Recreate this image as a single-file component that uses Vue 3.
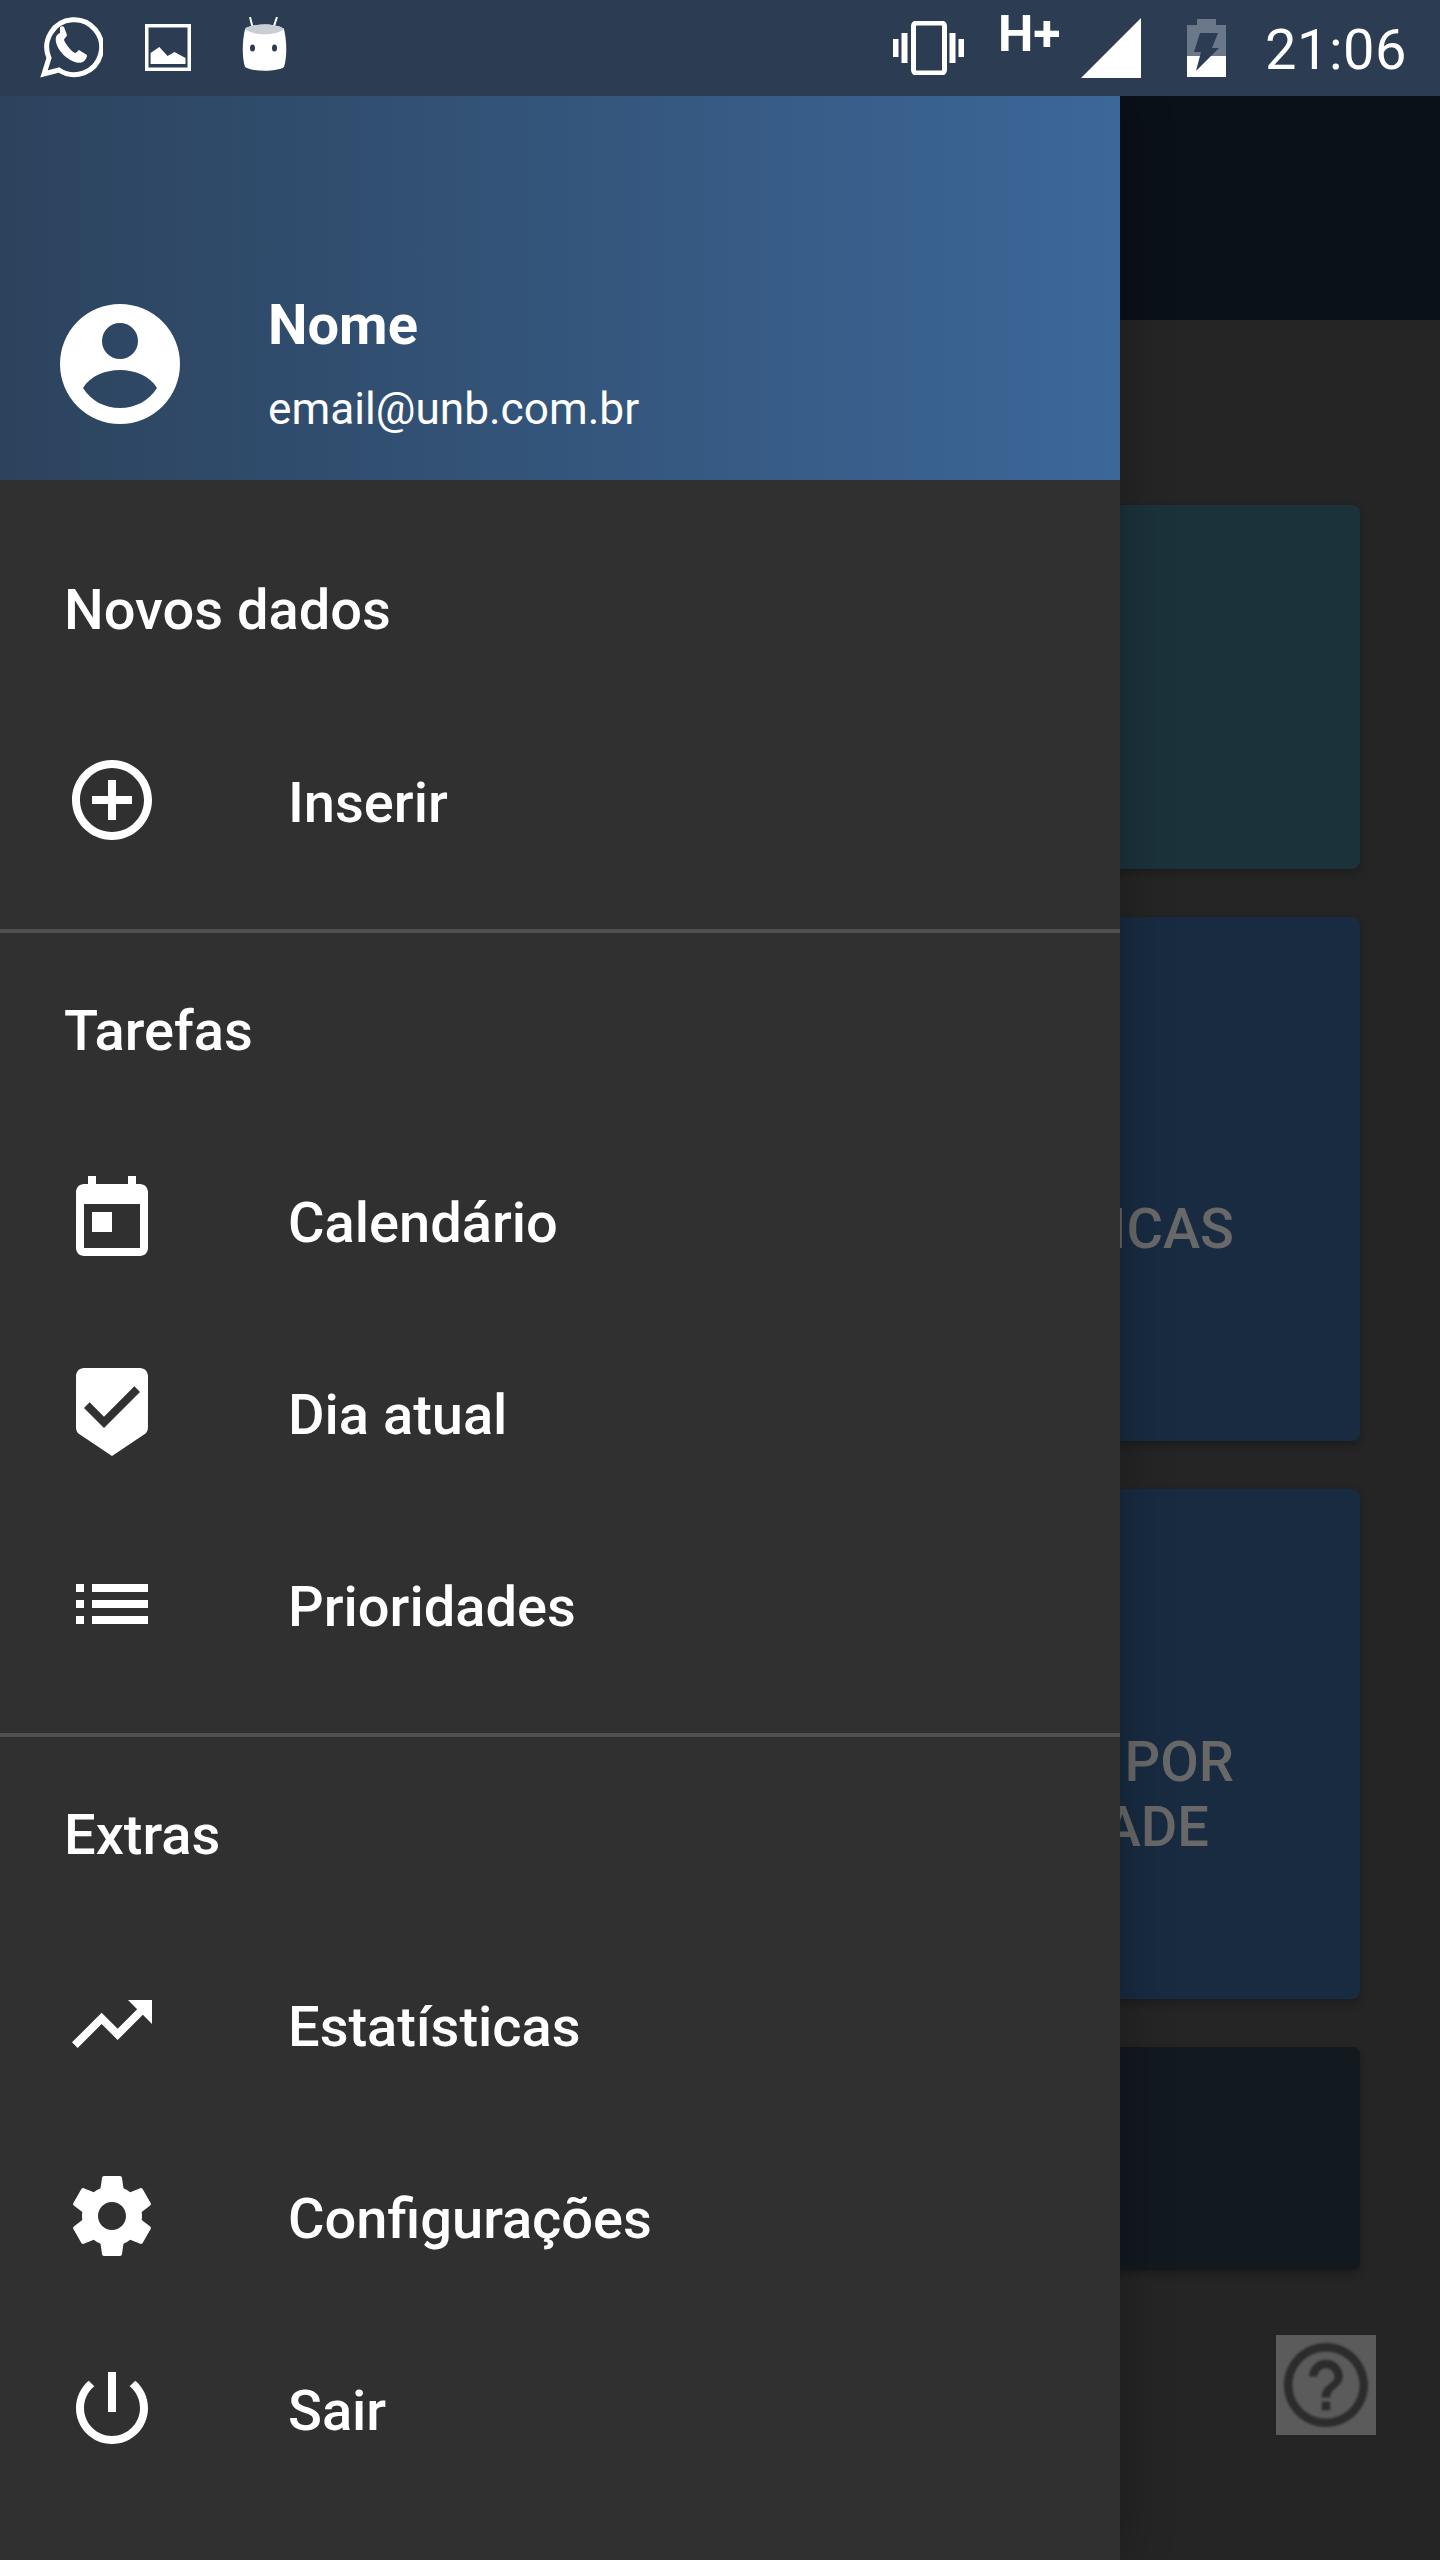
<script setup>
const icons = {
  add: 'M13 7h-2v4H7v2h4v4h2v-4h4v-2h-4V7zm-1-5C6.48 2 2 6.48 2 12s4.48 10 10 10 10-4.48 10-10S17.52 2 12 2zm0 18c-4.41 0-8-3.59-8-8s3.59-8 8-8 8 3.59 8 8-3.59 8-8 8z',
  calendar: 'M19 3h-1V1h-2v2H8V1H6v2H5c-1.11 0-1.99.9-1.99 2L3 19c0 1.1.89 2 2 2h14c1.1 0 2-.9 2-2V5c0-1.1-.9-2-2-2zm0 16H5V8h14v11zM7 10h5v5H7z',
  today: 'M19 1H5c-1.1 0-1.99.9-1.99 2L3 15.93c0 .69.35 1.3.88 1.66L12 23l8.11-5.41c.53-.36.88-.97.88-1.66L21 3c0-1.1-.9-2-2-2zm-9 15l-5-5 1.41-1.41L10 13.17l7.59-7.59L19 7l-9 9z',
  list: 'M3 13h2v-2H3v2zm0 4h2v-2H3v2zm0-8h2V7H3v2zm4 4h14v-2H7v2zm0 4h14v-2H7v2zM7 7v2h14V7H7z',
  trend: 'M16 6l2.29 2.29-4.88 4.88-4-4L2 16.59 3.41 18l6-6 4 4 6.3-6.29L22 12V6z',
  gear: 'M19.43 12.98c.04-.32.07-.64.07-.98s-.03-.66-.07-.98l2.11-1.65c.19-.15.24-.42.12-.64l-2-3.46c-.12-.22-.39-.3-.61-.22l-2.49 1c-.52-.4-1.08-.73-1.69-.98l-.38-2.65C14.46 2.18 14.25 2 14 2h-4c-.25 0-.46.18-.49.42l-.38 2.65c-.61.25-1.17.59-1.69.98l-2.49-1c-.23-.09-.49 0-.61.22l-2 3.46c-.13.22-.07.49.12.64l2.11 1.65c-.04.32-.07.65-.07.98s.03.66.07.98l-2.11 1.65c-.19.15-.24.42-.12.64l2 3.46c.12.22.39.3.61.22l2.49-1c.52.4 1.08.73 1.69.98l.38 2.65c.03.24.24.42.49.42h4c.25 0 .46-.18.49-.42l.38-2.65c.61-.25 1.17-.59 1.69-.98l2.49 1c.23.09.49 0 .61-.22l2-3.46c.12-.22.07-.49-.12-.64l-2.11-1.65zM12 15.5c-1.93 0-3.5-1.57-3.5-3.5s1.57-3.5 3.5-3.5 3.5 1.57 3.5 3.5-1.57 3.5-3.5 3.5z',
  power: 'M13 3h-2v10h2V3zm4.83 2.17l-1.42 1.42C17.99 7.86 19 9.81 19 12c0 3.87-3.13 7-7 7s-7-3.13-7-7c0-2.19 1.01-4.14 2.58-5.42L6.17 5.17C4.23 6.82 3 9.26 3 12c0 4.97 4.03 9 9 9s9-4.03 9-9c0-2.74-1.23-5.18-3.17-6.83z',
}

const cards = [
  { cls: 'teal', label: [] },
  { cls: 'blue tall', label: [{ text: 'ICAS', inset: 0 }] },
  { cls: 'blue taller', label: [{ text: 'POR', inset: 0 }, { text: 'ADE', inset: 25 }] },
  { cls: 'navy', label: [] },
]

const sections = [
  { title: 'Novos dados', items: [{ icon: 'add', text: 'Inserir' }] },
  {
    title: 'Tarefas',
    items: [
      { icon: 'calendar', text: 'Calendário' },
      { icon: 'today', text: 'Dia atual' },
      { icon: 'list', text: 'Prioridades' },
    ],
  },
  {
    title: 'Extras',
    items: [
      { icon: 'trend', text: 'Estatísticas' },
      { icon: 'gear', text: 'Configurações' },
      { icon: 'power', text: 'Sair' },
    ],
  },
]
</script>

<template>
  <div class="screen">
    <div class="statusbar">
      <div class="status-left">
        <svg class="st-whats" viewBox="0 0 63 62" width="63" height="62">
          <path d="M4 57L9 41A27.400 27.400 0 1 1 19 53z" fill="none" stroke="#fff" stroke-width="5" />
          <path d="M20 16c-3 1-5 4-4 9 1 5 5 11 10 15 6 5 13 7 17 5 3-2 4-5 4-7l-8-5c-1 0-2 3-4 3-3-1-9-8-11-13 0-2 3-3 3-5l-3-8c-1-1-3-1-4 0z" fill="#fff" />
        </svg>
        <svg class="st-image" viewBox="0 0 46 47" width="46" height="47">
          <rect x="1.750" y="1.750" width="42.500" height="43.500" fill="none" stroke="#fff" stroke-width="3.500" />
          <path d="M5.600 40V29l8.700-6 8.300 9 6.900-4 11 6v6z" fill="#fff" />
        </svg>
        <svg class="st-android" viewBox="0 0 45 54" width="45" height="54">
          <path d="M8 0l3 12M35 0l-4 12" stroke="#fff" stroke-width="2" />
          <path d="M3 12C10 6 35 6 42 12C45 25 45 40 42 50C35 55 10 55 3 50C0 40 0 25 3 12z" fill="#fff" />
          <path d="M3 12C10 6 35 6 42 12C35 19 10 19 3 12z" fill="#c9ced4" />
          <ellipse cx="10.500" cy="31" rx="2.500" ry="3.500" fill="#2b3c53" />
          <ellipse cx="32.500" cy="31" rx="2.500" ry="3.500" fill="#2b3c53" />
        </svg>
      </div>
      <div class="status-right">
        <svg class="st-vibrate" viewBox="0 0 72 54" width="72" height="54">
          <rect x="20.500" y="2" width="31" height="50" rx="3" fill="none" stroke="#fff" stroke-width="5" />
          <path d="M0 18h5.500v18H0zM8.500 12h6v30h-6zM56.500 12h6v30h-6zM65.500 18H71v18h-5.500z" fill="#fff" />
        </svg>
        <span class="st-hplus">H+</span>
        <svg class="st-signal" viewBox="0 0 60 60" width="60" height="60"><path d="M0 60L60 0v60z" fill="#fff" /></svg>
        <svg class="st-battery" viewBox="0 0 39 58" width="39" height="58">
          <path d="M10 0h19v6h10v52H0V6h10z" fill="#6a788a" />
          <path d="M0 37h39v21H0z" fill="#fff" />
          <path d="M13 14h18l-6 15h7L9 52l5-19H7z" fill="#2b3c53" />
        </svg>
        <span class="st-time">21:06</span>
      </div>
    </div>

    <div class="backdrop">
      <div class="toolbar"></div>
      <div class="cards">
        <div v-for="(c, i) in cards" :key="i" class="card" :class="c.cls">
          <span v-if="c.label.length" class="card-label">
            <span v-for="l in c.label" :key="l.text" :style="{ marginRight: l.inset + 'px' }">{{ l.text }}</span>
          </span>
        </div>
      </div>
      <div class="help">
        <svg viewBox="2 2 20 20" width="84" height="84">
          <path fill="#2c2c2c" d="M11 18h2v-2h-2v2zm1-16C6.48 2 2 6.48 2 12s4.48 10 10 10 10-4.48 10-10S17.52 2 12 2zm0 18c-4.41 0-8-3.59-8-8s3.59-8 8-8 8 3.59 8 8-3.59 8-8 8zm0-14c-2.21 0-4 1.79-4 4h2c0-1.100.9-2 2-2s2 .9 2 2c0 2-3 1.750-3 5h2c0-2.250 3-2.500 3-5 0-2.210-1.790-4-4-4z" />
        </svg>
      </div>
    </div>

    <aside class="drawer">
      <header class="drawer-head">
        <svg class="avatar" viewBox="0 0 120 120" width="120" height="120">
          <path fill-rule="evenodd" fill="#fff" d="M60 0a60 60 0 1 0 0 120A60 60 0 0 0 60 0zm0 19a18 18 0 1 1 0 36 18 18 0 0 1 0-36zM23 84C30 72 45 66 60 66s30 6 37 18C89 97 75 104 60 104S31 97 23 84z" />
        </svg>
        <div class="who">
          <div class="who-name">Nome</div>
          <div class="who-mail">email@unb.com.br</div>
        </div>
      </header>

      <section v-for="s in sections" :key="s.title" class="group">
        <h3 class="group-title">{{ s.title }}</h3>
        <div v-for="it in s.items" :key="it.text" class="row">
          <svg class="row-icon" viewBox="0 0 24 24" width="96" height="96">
            <path fill="#fff" :d="icons[it.icon]" />
          </svg>
          <span class="row-text">{{ it.text }}</span>
        </div>
      </section>
    </aside>
  </div>
</template>

<style scoped>
.screen {
  position: relative;
  width: 1440px;
  height: 2560px;
  overflow: hidden;
  background: #252525;
  font-family: Roboto, "Noto Sans", sans-serif;
  color: #fff;
}

.statusbar {
  position: relative;
  z-index: 2;
  height: 96px;
  background: #2b3c53;
  display: flex;
  justify-content: space-between;
  box-sizing: border-box;
  padding: 0 33px 0 40px;
}

.status-left,
.status-right {
  display: flex;
  align-items: flex-start;
}

.st-whats { margin-top: 17px; }
.st-image { margin: 24px 0 0 42px; }
.st-android { margin: 17px 0 0 51px; }

.st-vibrate { margin-top: 21px; }
.st-hplus {
  font-size: 50px;
  font-weight: 700;
  line-height: 50px;
  margin: 9px 0 0 33px;
  width: 64px;
}
.st-signal { margin: 18px 0 0 19px; }
.st-battery { margin: 19px 0 0 46px; }
.st-time {
  font-size: 56px;
  line-height: 60px;
  margin: 20px 0 0 39px;
  letter-spacing: .5px;
}

.backdrop {
  height: 2464px;
  position: relative;
}

.toolbar {
  height: 224px;
  background: #0a1117;
}

.cards {
  display: flex;
  flex-direction: column;
  gap: 48px;
  padding: 185px 80px 0 80px;
}

.card {
  height: 364px;
  border-radius: 8px;
  box-shadow: 0 4px 8px rgba(0, 0, 0, .25);
  display: flex;
  align-items: center;
  justify-content: flex-end;
  box-sizing: border-box;
  padding-top: 100px;
}
.card.teal { background: #1b323b; }
.card.blue { background: #182b41; }
.card.navy { background: #12191f; height: 223px; }
.card.tall { height: 524px; }
.card.taller { height: 510px; padding-top: 102px; }

.card-label {
  display: flex;
  flex-direction: column;
  align-items: flex-end;
  font-size: 56px;
  font-weight: 500;
  line-height: 65px;
  color: #686868;
  padding-right: 126px;
}

.help {
  position: absolute;
  left: 1276px;
  top: 2239px;
  width: 100px;
  height: 100px;
  background: #5b5b5b;
  display: flex;
  align-items: center;
  justify-content: center;
}
.help svg {
  filter: blur(1px);
}

.drawer {
  position: absolute;
  left: 0;
  top: 96px;
  bottom: 0;
  width: 1120px;
  background: #303030;
  box-shadow: 0 0 48px rgba(0, 0, 0, .28);
}

.drawer-head {
  height: 384px;
  background: linear-gradient(90deg, #2c435d, #3c6799);
  display: flex;
  align-items: center;
  box-sizing: border-box;
  padding: 152px 0 0 60px;
}

.who {
  margin-left: 88px;
  margin-top: -1px;
}
.who-name {
  font-size: 56px;
  font-weight: 700;
  line-height: 64px;
}
.who-mail {
  font-size: 44.200px;
  line-height: 52px;
  margin-top: 26px;
}

.group {
  border-bottom: 4px solid #505050;
  padding: 66px 0 33px;
}
.group:first-of-type {
  padding-top: 98px;
}
.group:first-of-type .group-title {
  height: 126px;
}
.group:last-child {
  border-bottom: 0;
}

.group-title {
  margin: 0;
  font-size: 56px;
  font-weight: 500;
  line-height: 64px;
  padding: 0 0 0 64px;
  height: 125px;
}

.row {
  height: 192px;
  display: flex;
  align-items: center;
}

.row-icon {
  margin-left: 64px;
  flex: none;
}

.row-text {
  margin: 6px 0 0 128px;
  font-size: 56px;
  font-weight: 500;
}
</style>
